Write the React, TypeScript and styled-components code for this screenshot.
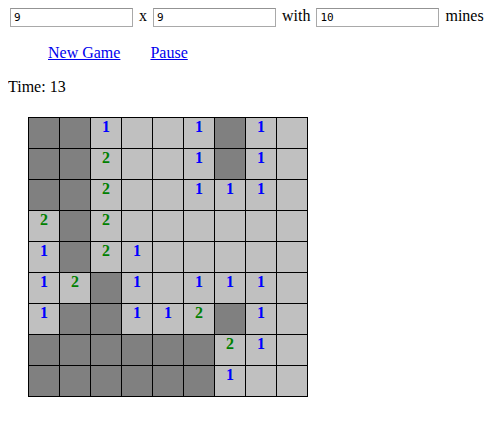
import React from "react";
import styled, { createGlobalStyle } from "styled-components";

const GlobalStyle = createGlobalStyle`
  body {
    margin: 8px;
    font-family: "Liberation Serif", "Times New Roman", serif;
    font-size: 16px;
    color: #000;
    background: #fff;
  }
`;

// U = still covered, 0 = opened and empty, 1..8 = neighbour count
const BOARD = [
  "UU1001U10",
  "UU2001U10",
  "UU200111 ",
  "2U2000000",
  "1U2100000",
  "12U101110",
  "1UU112U10",
  "UUUUUU210",
  "UUUUUU100",
];

const NUMBER_COLORS: Record<string, string> = {
  "1": "#0000ff",
  "2": "#008000",
  "3": "#ff0000",
};

const ControlsEl = styled.div`
  line-height: 16px;
  white-space: nowrap;
`;

const SizeInput = styled.input`
  box-sizing: border-box;
  width: 123px;
  height: 19px;
  margin: 0 2px;
  padding: 0 3px;
  border: 1px solid #a9a9a9;
  border-top-color: #939393;
  font-family: "DejaVu Sans Mono", "Liberation Mono", monospace;
  font-size: 11px;
  color: #000;
  background: #fff;
  vertical-align: baseline;
  outline: none;
`;

const LinksEl = styled.div`
  display: flex;
  gap: 30px;
  margin-top: 17px;
  padding-left: 40px;
  line-height: 18px;
`;

const ActionLink = styled.a`
  color: #0000ee;
  text-decoration: underline;
  cursor: pointer;
`;

const TimeEl = styled.div`
  margin-top: 16px;
  line-height: 18px;
`;

const BoardEl = styled.div`
  display: inline-grid;
  grid-template-columns: repeat(9, 30px);
  grid-auto-rows: 30px;
  gap: 1px;
  padding: 1px;
  margin: 21px 0 0 20px;
  background: #000;
`;

const Cell = styled.div<{ $covered: boolean; $color?: string }>`
  background: ${(p) => (p.$covered ? "#808080" : "#c0c0c0")};
  color: ${(p) => p.$color ?? "#000"};
  font-weight: bold;
  text-align: center;
  line-height: 18px;
  user-select: none;
`;

export default function App() {
  return (
    <>
      <GlobalStyle />
      <ControlsEl>
        <SizeInput defaultValue="9" /> x <SizeInput defaultValue="9" /> with{" "}
        <SizeInput defaultValue="10" /> mines
      </ControlsEl>
      <LinksEl>
        <ActionLink href="#">New Game</ActionLink>
        <ActionLink href="#">Pause</ActionLink>
      </LinksEl>
      <TimeEl>Time: 13</TimeEl>
      <BoardEl>
        {BOARD.map((row, r) =>
          row.split("").map((ch, c) => {
            const covered = ch === "U";
            const count = !covered && ch !== "0" && ch !== " " ? ch : "";
            return (
              <Cell key={`${r}-${c}`} $covered={covered} $color={NUMBER_COLORS[ch]}>
                {count}
              </Cell>
            );
          })
        )}
      </BoardEl>
    </>
  );
}
